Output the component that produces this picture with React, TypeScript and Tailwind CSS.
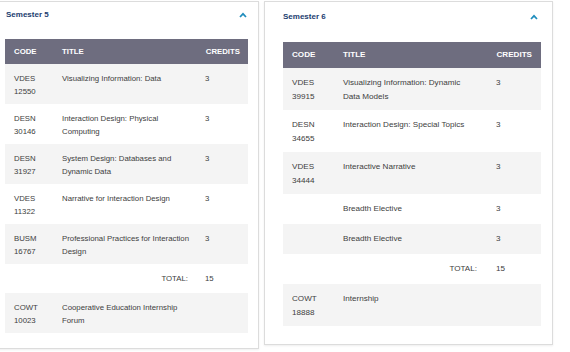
type Course = {
  code?: string[];
  title: string;
  credits?: string;
};

type Semester = {
  name: string;
  courses: Course[];
  total: string;
  extra: Course;
};

const semesters: Semester[] = [
  {
    name: 'Semester 5',
    courses: [
      { code: ['VDES', '12550'], title: 'Visualizing Information: Data', credits: '3' },
      { code: ['DESN', '30146'], title: 'Interaction Design: Physical Computing', credits: '3' },
      { code: ['DESN', '31927'], title: 'System Design: Databases and Dynamic Data', credits: '3' },
      { code: ['VDES', '11322'], title: 'Narrative for Interaction Design', credits: '3' },
      { code: ['BUSM', '16767'], title: 'Professional Practices for Interaction Design', credits: '3' },
    ],
    total: '15',
    extra: { code: ['COWT', '10023'], title: 'Cooperative Education Internship Forum' },
  },
  {
    name: 'Semester 6',
    courses: [
      { code: ['VDES', '39915'], title: 'Visualizing Information: Dynamic Data Models', credits: '3' },
      { code: ['DESN', '34655'], title: 'Interaction Design: Special Topics', credits: '3' },
      { code: ['VDES', '34444'], title: 'Interactive Narrative', credits: '3' },
      { title: 'Breadth Elective', credits: '3' },
      { title: 'Breadth Elective', credits: '3' },
    ],
    total: '15',
    extra: { code: ['COWT', '18888'], title: 'Internship' },
  },
];

// each card was shot at a slightly different size, so sizes live per card
const looks = [
  {
    card: 'ml-[-13px] w-[272px] pl-[17px] pr-[10px] pb-[15px]',
    head: 'h-[26px] mb-[11px] pl-[1px] pr-[1px]',
    thead: 'h-[25px] text-[7.8px]',
    text: 'text-[7.8px] leading-[13px]',
    tall: 'h-[40px] pt-[8px]',
    short: 'h-[29px] pt-[8px]',
    code: 'w-[57px] pl-[9px]',
    title: 'w-[143px]',
    titlePad: 'pr-[12px]',
    totalPad: 'pr-[17px]',
    credits: 'pr-[8px]',
  },
  {
    card: 'w-[289px] pl-[18px] pr-[11px] pb-[18px]',
    head: 'h-[30px] mb-[10px] pl-[0px] pr-[3px]',
    thead: 'h-[26px] text-[8.1px]',
    text: 'text-[8.1px] leading-[14px]',
    tall: 'h-[42px] pt-[8px]',
    short: 'h-[30px] pt-[8px]',
    code: 'w-[60px] pl-[9px]',
    title: 'w-[153px]',
    titlePad: 'pr-[22px]',
    totalPad: 'pr-[19px]',
    credits: 'pr-[9px]',
  },
];

function Chevron() {
  return (
    <svg width="8" height="6" viewBox="0 0 8 6" fill="none">
      <path d="M1 5 L4 1.8 L7 5" stroke="#1f8dbd" strokeWidth="1.7" />
    </svg>
  );
}

function SemesterCard({ semester, look }: { semester: Semester; look: (typeof looks)[number] }) {
  return (
    <div
      className={`${look.card} shrink-0 border border-[#dcdcdc] bg-white shadow-[0_1px_2px_rgba(0,0,0,0.07)]`}
    >
      <div className={`${look.head} flex items-center justify-between`}>
        <span className="text-[8px] font-bold text-[#1b3d70]">{semester.name}</span>
        <Chevron />
      </div>

      <div className={`${look.text} text-[#404040]`}>
        <div className={`${look.thead} flex items-center bg-[#6e6d7f] font-bold text-white`}>
          <div className={look.code}>CODE</div>
          <div className={look.title}>TITLE</div>
          <div className={`flex-1 text-right ${look.credits}`}>CREDITS</div>
        </div>

        {semester.courses.map((course, index) => (
          <div
            key={index}
            className={`flex ${course.code ? look.tall : look.short} ${index % 2 === 0 ? 'bg-[#f4f4f4]' : 'bg-white'}`}
          >
            <div className={look.code}>
              {course.code?.map((part) => (
                <div key={part}>{part}</div>
              ))}
            </div>
            <div className={`${look.title} ${look.titlePad}`}>{course.title}</div>
            <div className="flex-1">{course.credits}</div>
          </div>
        ))}

        <div className={`flex ${look.short} bg-white`}>
          <div className={look.code} />
          <div className={`${look.title} ${look.totalPad} text-right`}>TOTAL:</div>
          <div className="flex-1">{semester.total}</div>
        </div>

        <div className={`flex ${look.tall} bg-[#f4f4f4]`}>
          <div className={look.code}>
            {semester.extra.code?.map((part) => (
              <div key={part}>{part}</div>
            ))}
          </div>
          <div className={`${look.title} ${look.titlePad}`}>{semester.extra.title}</div>
          <div className="flex-1" />
        </div>
      </div>
    </div>
  );
}

export default function App() {
  return (
    <div
      className="h-[352px] w-[570px] overflow-hidden bg-white pt-[1px]"
      style={{ fontFamily: '"Liberation Sans", Arial, sans-serif' }}
    >
      <div className="flex items-start gap-[5px]">
        {semesters.map((semester, i) => (
          <SemesterCard key={semester.name} semester={semester} look={looks[i]} />
        ))}
      </div>
    </div>
  );
}
